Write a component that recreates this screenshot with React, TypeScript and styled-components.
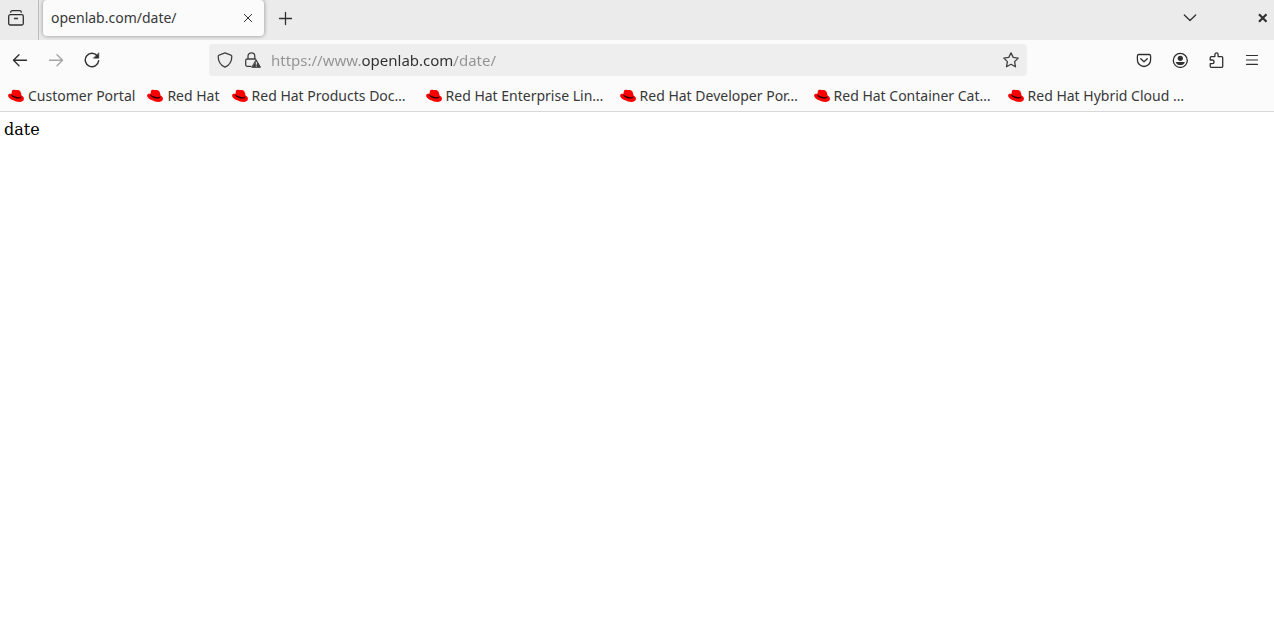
import React from "react";
import styled, { createGlobalStyle } from "styled-components";

const GlobalStyle = createGlobalStyle`
  *, *::before, *::after { box-sizing: border-box; }
  body { margin: 0; background: #ffffff; }
  button, input { font: inherit; }
`;

const ink = "#303030";
const textInk = "#383838";

const Browser = styled.div`
  display: flex;
  flex-direction: column;
  min-height: 100vh;
  font-family: "Noto Sans", "Open Sans", sans-serif;
  font-size: 14px;
  line-height: 20px;
  color: ${textInk};
`;

const TabStrip = styled.header`
  display: flex;
  height: 40px;
  background: #ebebeb;
`;

const IconButton = styled.button<{ $width?: number }>`
  display: flex;
  align-items: center;
  justify-content: center;
  flex: none;
  width: ${({ $width = 36 }) => $width}px;
  height: 36px;
  padding: 0;
  border: 0;
  background: none;
  color: ${ink};

  &:disabled {
    color: #a5a5a5;
  }
`;

const ViewButtonBox = styled.div`
  width: 39px;
  padding-right: 6px;
  border-right: 1px solid #bcbcbc;
`;

const Tab = styled.div`
  display: flex;
  align-items: center;
  width: 221px;
  height: 36px;
  margin-left: 4px;
  padding-left: 8px;
  border-radius: 4px;
  background: #fbfbfb;
  box-shadow: 0 0 4px rgba(0, 0, 0, 0.4);
`;

const TabTitle = styled.span`
  flex: 1;
  white-space: nowrap;
`;

const WindowControls = styled.div`
  display: flex;
  margin-left: auto;
  gap: 42px;
`;

const NavBar = styled.nav`
  display: flex;
  align-items: center;
  height: 40px;
  padding: 0 4px 0 2px;
  background: #fbfbfb;
`;

const Spacer = styled.div`
  width: 99px;
`;

const AddressBar = styled.div`
  display: flex;
  flex: 1;
  align-items: center;
  height: 32px;
  padding: 0 2px;
  border-radius: 4px;
  background: #eeeeee;
`;

const AddressIcon = styled(IconButton)`
  height: 28px;
  color: #404040;
`;

/* Only the registered domain is dark; the rest of the address is dimmed. */
const AddressInput = styled.input`
  flex: 1;
  min-width: 0;
  height: 28px;
  margin-left: 4px;
  padding: 0;
  border: 0;
  outline: 0;
  font-size: 15px;
  color: transparent;
  background: linear-gradient(
    to right,
    #929292 91px,
    ${ink} 91px,
    ${ink} 183px,
    #929292 183px
  );
  background-clip: text;
  -webkit-background-clip: text;
`;

const BookmarksBar = styled.nav`
  display: flex;
  gap: 12px;
  height: 32px;
  padding: 6px 8px 5px;
  border-bottom: 1px solid #d8d8d8;
  background: #fbfbfb;
  overflow: hidden;
`;

const Bookmark = styled.a`
  display: flex;
  flex: none;
  gap: 4px;
  height: 20px;
  align-items: center;
  color: ${textInk};
  text-decoration: none;
`;

const BookmarkLabel = styled.span<{ $full?: boolean }>`
  width: ${({ $full }) => ($full ? "162px" : "auto")};
  white-space: nowrap;
`;

const Page = styled.main`
  flex: 1;
  padding: 8px 4px;
  background: #ffffff;
  color: #000000;
  font-family: "DejaVu Serif", serif;
  font-size: 16px;
  line-height: 19px;
`;

type IconProps = { children: React.ReactNode; size?: number; weight?: number };

const Icon = ({ children, size = 16, weight = 1.3 }: IconProps) => (
  <svg
    width={size}
    height={size}
    viewBox="0 0 16 16"
    fill="none"
    stroke="currentColor"
    strokeWidth={weight}
    strokeLinecap="round"
    strokeLinejoin="round"
    aria-hidden="true"
  >
    {children}
  </svg>
);

const RedHat = () => (
  <svg width="16" height="16" viewBox="0 0 16 16" aria-hidden="true">
    <path
      fill="#fa0000"
      d="M3.9 3.300C4.300 1.800 5.800 1.600 7.200 2c1 .3 1.800-.2 3 .1 1.400.4 2.300 1.200 2.700 2.700l.8 3c1.700.9 2.500 2.100 2.200 3.400-.5 2.800-4.300 3.200-7.900 2.200C4 12.300.1 10.100.1 7.600.1 6.200 1.600 5.500 3.400 5.900Z"
    />
    <path
      fill="#200000"
      d="M3.500 6.100C3.600 6.900 4.800 7.900 7.200 8.600c2.500.8 5 .8 5.900-.4l.3 1c-.6 1.300-3.500 1.600-6.300.7C4.500 9.100 3 7.900 3.200 6.800Z"
    />
  </svg>
);

const bookmarks = [
  { label: "Customer Portal" },
  { label: "Red Hat" },
  { label: "Red Hat Products Doc…", full: true },
  { label: "Red Hat Enterprise Lin…", full: true },
  { label: "Red Hat Developer Por…", full: true },
  { label: "Red Hat Container Cat…", full: true },
  { label: "Red Hat Hybrid Cloud …", full: true },
];

export default function App() {
  return (
    <Browser>
      <GlobalStyle />
      <TabStrip>
        <ViewButtonBox>
          <IconButton $width={32} aria-label="Firefox View">
            <Icon>
              <rect x=".7" y="4.700" width="14.600" height="10.300" rx="1.500" />
              <path d="M2.700 2.300C2.700 1.300 3.300.7 4.300.7h7.400c1 0 1.600.6 1.600 1.600M6.500 8.500h3" />
            </Icon>
          </IconButton>
        </ViewButtonBox>
        <Tab>
          <TabTitle>openlab.com/date/</TabTitle>
          <IconButton $width={32} aria-label="Close tab">
            <Icon weight={1}>
              <path d="M4.300 4.300l7.400 7.400M11.700 4.300l-7.400 7.400" />
            </Icon>
          </IconButton>
        </Tab>
        <IconButton $width={42} aria-label="New tab">
          <Icon>
            <path d="M8.500 2.500v12M2.500 8.500h12" />
          </Icon>
        </IconButton>
        <WindowControls>
          <IconButton aria-label="List all tabs">
            <Icon>
              <path d="M2.300 5L8 10.500 13.700 5" />
            </Icon>
          </IconButton>
          <IconButton $width={24} aria-label="Close window">
            <Icon weight={2.2}>
              <path strokeLinecap="butt" d="M5 4.300l7.500 7.500M12.500 4.300L5 11.800" />
            </Icon>
          </IconButton>
        </WindowControls>
      </TabStrip>

      <NavBar aria-label="Navigation">
        <IconButton aria-label="Back">
          <Icon weight={1.4}>
            <path d="M1.500 8.300h13M7 2.800L1.500 8.300 7 13.800" />
          </Icon>
        </IconButton>
        <IconButton aria-label="Forward" disabled>
          <Icon weight={1.4}>
            <path d="M14.500 8.300h-13M9 2.800L14.500 8.300 9 13.800" />
          </Icon>
        </IconButton>
        <IconButton aria-label="Reload">
          <Icon weight={1.4}>
            <path d="M13.500 4.200A6.700 6.700 0 1 0 14.600 8.800" />
            <path fill="currentColor" strokeWidth=".5" d="M14.800 1v5.200H9.600Z" />
          </Icon>
        </IconButton>
        <Spacer />
        <AddressBar>
          <AddressIcon $width={28} aria-label="Tracking protection">
            <Icon>
              <path d="M8 .8l5.900 2.300c.6.2.9.7.9 1.300 0 4.600-2.300 8.700-6.800 10.800C3.500 13.100 1.200 9 1.200 4.400c0-.6.3-1.100.9-1.300Z" />
            </Icon>
          </AddressIcon>
          <AddressIcon $width={28} aria-label="Site information">
            <Icon>
              <path d="M3 7V4.200a3.400 3.400 0 0 1 6.800 0V7M6 14.300H2.200A1.500 1.500 0 0 1 .7 12.800V8.500A1.500 1.500 0 0 1 2.200 7h8.400" />
              <path fill="currentColor" strokeWidth="1" d="M11.300 8l4.200 7.300H7.100Z" />
              <path stroke="#ffffff" strokeWidth="1" d="M11.300 10.300v2M11.300 14v.1" />
            </Icon>
          </AddressIcon>
          <AddressInput
            type="text"
            aria-label="Address"
            spellCheck={false}
            defaultValue="https://www.openlab.com/date/"
          />
          <AddressIcon $width={28} aria-label="Bookmark this page">
            <Icon>
              <path d="M8 .9l2.200 4.500 5 .7-3.600 3.500.9 5.200L8 12.300l-4.500 2.500.9-5.200L.8 6.100l5-.7Z" />
            </Icon>
          </AddressIcon>
        </AddressBar>
        <Spacer />
        <IconButton aria-label="Save to Pocket">
          <Icon>
            <path d="M2.800 2.500h10.400c.8 0 1.400.6 1.400 1.400v4a6.600 6.600 0 0 1-13.200 0v-4c0-.8.6-1.400 1.400-1.400ZM4.700 6.700L8 9.800l3.300-3.100" />
          </Icon>
        </IconButton>
        <IconButton aria-label="Account">
          <Icon>
            <circle cx="8.300" cy="8.400" r="7" />
            <circle cx="8.300" cy="6.300" r="2.600" fill="currentColor" stroke="none" />
            <path fill="currentColor" stroke="none" d="M3.700 9.900h9.200C12.200 12.100 10.400 13.100 8.300 13.100S4.400 12.100 3.700 9.900Z" />
          </Icon>
        </IconButton>
        <IconButton aria-label="Extensions">
          <Icon>
            <path d="M2.200 8V5.700c0-.7.400-1.100 1.100-1.100h3.600V2.500a1.600 1.600 0 0 1 3.200 0v2.100h3.600c.6 0 1 .4 1 1v9c0 .4-.3.700-.7.700H3.300a1.100 1.100 0 0 1-1.100-1.100v-2.500h2a1.850 1.850 0 0 0 0-3.700Z" />
          </Icon>
        </IconButton>
        <IconButton aria-label="Open application menu">
          <Icon weight={1.2}>
            <path d="M2.500 3.500h11M2.500 8h11M2.500 12.300h11" />
          </Icon>
        </IconButton>
      </NavBar>

      <BookmarksBar aria-label="Bookmarks">
        {bookmarks.map(({ label, full }) => (
          <Bookmark key={label} href="#">
            <RedHat />
            <BookmarkLabel $full={full}>{label}</BookmarkLabel>
          </Bookmark>
        ))}
      </BookmarksBar>

      <Page>date</Page>
    </Browser>
  );
}
